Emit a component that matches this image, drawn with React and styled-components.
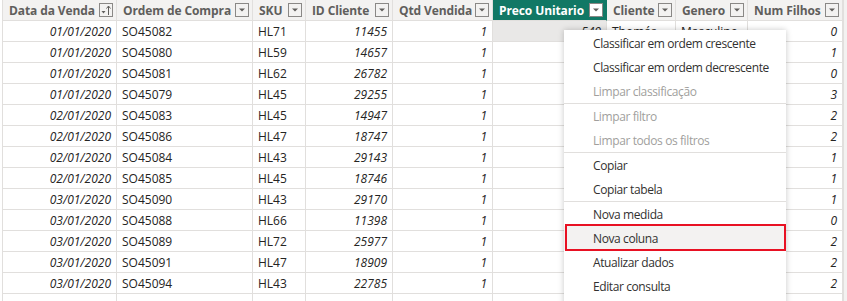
import styled, { createGlobalStyle } from "styled-components";

const GlobalStyle = createGlobalStyle`
  html, body {
    margin: 0;
    padding: 0;
    background: #ffffff;
    overflow: hidden;
  }
  body {
    font-family: "Segoe UI", "Open Sans", "Noto Sans", sans-serif;
  }
`

const columns = [
    { title: "Data da Venda", width: 114, align: "right", italic: true, sort: true },
    { title: "Ordem de Compra", width: 136, align: "left" },
    { title: "SKU", width: 53, align: "left" },
    { title: "ID Cliente", width: 87, align: "right", italic: true },
    { title: "Qtd Vendida", width: 100, align: "right", italic: true },
    { title: "Preco Unitario", width: 114, align: "right", italic: true, active: true },
    { title: "Cliente", width: 69, align: "left" },
    { title: "Genero", width: 72, align: "left" },
    { title: "Num Filhos", width: 95, align: "right", italic: true },
]

const rows = [
    ["01/01/2020", "SO45082", "HL71", "11455", "1", "549", "Thomás", "Masculino", "0"],
    ["01/01/2020", "SO45080", "HL59", "14657", "1", "", "", "", "1"],
    ["01/01/2020", "SO45081", "HL62", "26782", "1", "", "", "", "0"],
    ["01/01/2020", "SO45079", "HL45", "29255", "1", "", "", "", "3"],
    ["02/01/2020", "SO45083", "HL45", "14947", "1", "", "", "", "2"],
    ["02/01/2020", "SO45086", "HL47", "18747", "1", "", "", "", "2"],
    ["02/01/2020", "SO45084", "HL43", "29143", "1", "", "", "", "1"],
    ["02/01/2020", "SO45085", "HL45", "18746", "1", "", "", "", "1"],
    ["03/01/2020", "SO45090", "HL43", "29170", "1", "", "", "", "1"],
    ["03/01/2020", "SO45088", "HL66", "11398", "1", "", "", "", "0"],
    ["03/01/2020", "SO45089", "HL72", "25977", "1", "", "", "", "2"],
    ["03/01/2020", "SO45091", "HL47", "18909", "1", "", "", "", "2"],
    ["03/01/2020", "SO45094", "HL43", "22785", "1", "", "", "", "2"],
]

const menuItems = [
    { label: "Classificar em ordem crescente" },
    { label: "Classificar em ordem decrescente" },
    { label: "Limpar classificação", disabled: true },
    { label: "Limpar filtro", disabled: true, separator: true },
    { label: "Limpar todos os filtros", disabled: true },
    { label: "Copiar", separator: true },
    { label: "Copiar tabela" },
    { label: "Nova medida", separator: true },
    { label: "Nova coluna", marked: true },
    { label: "Atualizar dados" },
    { label: "Editar consulta" },
]

const Page = styled.div`
position: relative;
width: 847px;
height: 301px;
overflow: hidden;
display: flex;
padding-left: 2px;
box-sizing: border-box;
`

const Grid = styled.div`
display: flex;
flex-direction: column;
border-left: 1px solid #e1dfdd;
`

const Row = styled.div`
display: flex;
height: 21px;
`

const HeaderCell = styled.div`
width: ${p => p.$width}px;
height: 21px;
box-sizing: border-box;
display: flex;
align-items: center;
justify-content: space-between;
padding: 0 3px 0 6px;
background: ${p => p.$active ? "#117865" : "#f3f2f1"};
color: ${p => p.$active ? "#ffffff" : "#605e5c"};
border-right: 1px solid ${p => p.$active ? "#117865" : "#e1dfdd"};
border-bottom: 1px solid #e1dfdd;
font-size: 12px;
font-weight: 700;
letter-spacing: -0.1px;
white-space: nowrap;
`

const Cell = styled.div`
width: ${p => p.$width}px;
height: 21px;
box-sizing: border-box;
padding: 0 5px;
display: flex;
align-items: center;
justify-content: ${p => p.$align === "right" ? "flex-end" : "flex-start"};
border-right: 1px solid #e1dfdd;
border-bottom: 1px solid #e1dfdd;
background: ${p => p.$hover ? "#e9e8e7" : "#ffffff"};
color: #252423;
font-size: 12px;
font-style: ${p => p.$italic ? "italic" : "normal"};
white-space: nowrap;
overflow: hidden;
`

const FilterBox = styled.div`
width: 14px;
height: 14px;
box-sizing: border-box;
border: 1px solid #8a8886;
background: ${p => p.$active ? "#ffffff" : "transparent"};
display: flex;
align-items: center;
justify-content: center;
flex-shrink: 0;
`

const Scrollbar = styled.div`
flex: 1;
border-left: 1px solid #e1dfdd;
background: #f3f2f1;
`

const Menu = styled.div`
position: absolute;
left: 564px;
top: 30px;
width: 222px;
height: 290px;
padding-top: 1px;
background: #ffffff;
box-shadow: 0 0 6px rgba(0, 0, 0, 0.22);
display: flex;
flex-direction: column;
`

const MenuItem = styled.div`
position: relative;
height: 24px;
flex-shrink: 0;
display: flex;
align-items: center;
padding-left: 29px;
border-top: ${p => p.$separator ? "1px solid #e1dfdd" : "none"};
background: ${p => p.$marked ? "#f3f2f1" : "transparent"};
color: ${p => p.$disabled ? "#a19f9d" : "#323130"};
font-size: 12px;
letter-spacing: -0.4px;
white-space: nowrap;
&::after {
    content: "";
    display: ${p => p.$marked ? "block" : "none"};
    position: absolute;
    left: 1px;
    right: 0;
    top: -2px;
    bottom: -1px;
    border: 2px solid #e81123;
}
`

function DropIcon() {
    return (
        <svg width="8" height="8" viewBox="0 0 8 8">
            <path d="M1 2.5 L7 2.5 L4 5.5 Z" fill="#605e5c" />
        </svg>
    )
}

function SortIcon() {
    return (
        <svg width="12" height="12" viewBox="0 0 12 12">
            <path d="M1.5 7 L5.5 7 L3.5 9.5 Z" fill="#605e5c" />
            <path d="M8.5 11 L8.5 2" stroke="#605e5c" strokeWidth="1" fill="none" />
            <path d="M6.5 4.5 L8.5 2 L10.5 4.5" stroke="#605e5c" strokeWidth="1" fill="none" />
        </svg>
    )
}

function App() {
    return (
        <>
            <GlobalStyle />
            <Page>
                <Grid>
                    <Row>
                        {columns.map(col => (
                            <HeaderCell key={col.title} $width={col.width} $active={col.active}>
                                <span>{col.title}</span>
                                <FilterBox $active={col.active}>
                                    {col.sort ? <SortIcon /> : <DropIcon />}
                                </FilterBox>
                            </HeaderCell>
                        ))}
                    </Row>
                    {rows.map((row, r) => (
                        <Row key={r}>
                            {row.map((value, c) => (
                                <Cell
                                    key={c}
                                    $width={columns[c].width}
                                    $align={columns[c].align}
                                    $italic={columns[c].italic}
                                    $hover={r === 0 && columns[c].active}
                                >
                                    {value}
                                </Cell>
                            ))}
                        </Row>
                    ))}
                    <Row>
                        {columns.map(col => (
                            <Cell key={col.title} $width={col.width}></Cell>
                        ))}
                    </Row>
                </Grid>
                <Scrollbar />
                <Menu>
                    {menuItems.map(item => (
                        <MenuItem
                            key={item.label}
                            $disabled={item.disabled}
                            $separator={item.separator}
                            $marked={item.marked}
                        >
                            {item.label}
                        </MenuItem>
                    ))}
                </Menu>
            </Page>
        </>
    )
}

export default App
